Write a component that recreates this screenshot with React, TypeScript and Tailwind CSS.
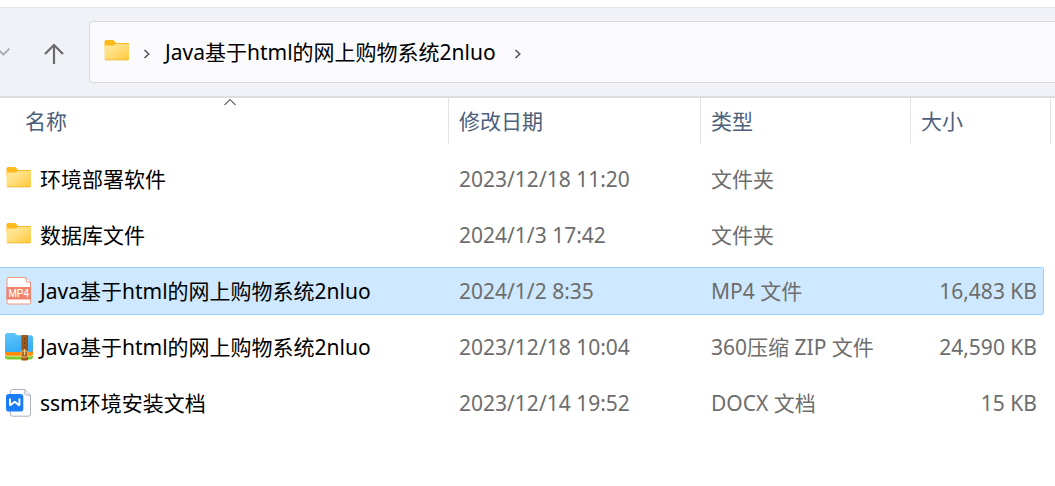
import React, { useId, useState } from "react";

type Kind = "folder" | "mp4" | "zip" | "docx";

interface Entry {
  id: number;
  kind: Kind;
  name: string;
  modified: string;
  type: string;
  size: string;
}

const entries: Entry[] = [
  { id: 1, kind: "folder", name: "环境部署软件", modified: "2023/12/18 11:20", type: "文件夹", size: "" },
  { id: 2, kind: "folder", name: "数据库文件", modified: "2024/1/3 17:42", type: "文件夹", size: "" },
  { id: 3, kind: "mp4", name: "Java基于html的网上购物系统2nluo", modified: "2024/1/2 8:35", type: "MP4 文件", size: "16,483 KB" },
  { id: 4, kind: "zip", name: "Java基于html的网上购物系统2nluo", modified: "2023/12/18 10:04", type: "360压缩 ZIP 文件", size: "24,590 KB" },
  { id: 5, kind: "docx", name: "ssm环境安装文档", modified: "2023/12/14 19:52", type: "DOCX 文档", size: "15 KB" },
];

function FolderIcon() {
  const id = useId();
  return (
    <svg width="28" height="28" viewBox="0 0 28 28" aria-hidden="true" className="shrink-0">
      <defs>
        <linearGradient id={id} x1="0" y1="0" x2="1" y2="1">
          <stop offset="0" stopColor="#ffe9a2" />
          <stop offset="0.5" stopColor="#ffdc78" />
          <stop offset="1" stopColor="#ffc836" />
        </linearGradient>
      </defs>
      <path d="M1.500 3.500a1.500 1.500 0 0 1 1.500-1.500h6.500c.6 0 1 .2 1.400.6L13 5h12a1 1 0 0 1 1 1V11H1.500z" fill="#fbb91b" />
      <path d="M1.500 8.700c0-.8.500-1.200 1.300-1.200h6.800c.7 0 1.100-.2 1.600-.6l.7-.5c.4-.3.800-.4 1.300-.4H25c.6 0 1 .4 1 1V20.700a1.300 1.300 0 0 1-1.300 1.300H2.800a1.300 1.300 0 0 1-1.300-1.300z" fill={`url(#${id})`} />
      <path d="M2 21.500c.2.300.5.400.8.400h21.900c.4 0 .7-.1.900-.4" fill="none" stroke="#eeb52e" strokeWidth="0.800" />
    </svg>
  );
}

function Mp4Icon() {
  return (
    <svg width="28" height="28" viewBox="0 0 28 28" aria-hidden="true" className="shrink-0">
      <path d="M3 .5h17.500L25.500 5V26a1 1 0 0 1-1 1H3a1 1 0 0 1-1-1V1.500a1 1 0 0 1 1-1z" fill="#fff" stroke="#f2957f" strokeWidth="1" />
      <path d="M21 .8V3.800a1.200 1.200 0 0 0 1.200 1.200h3.100" fill="#fff" stroke="#f2866d" strokeWidth="1" />
      <rect x="1.500" y="10" width="24.500" height="12.500" fill="#f2826a" />
      <text x="13.700" y="19.700" textAnchor="middle" fontFamily="Liberation Sans, sans-serif" fontSize="10" fill="#fff" stroke="#fff" strokeWidth="0.200">MP4</text>
    </svg>
  );
}

function ZipIcon() {
  const id = useId();
  return (
    <svg width="28" height="28" viewBox="0 0 28 28" aria-hidden="true" className="shrink-0">
      <defs>
        <linearGradient id={id} x1="0" y1="0" x2="0.300" y2="1">
          <stop offset="0" stopColor="#62c5fb" />
          <stop offset="1" stopColor="#36aef5" />
        </linearGradient>
      </defs>
      <path d="M0 17h28v6.500a3 3 0 0 1-3 3H3a3 3 0 0 1-3-3z" fill="#7dcb2c" />
      <path d="M0 15h28v6a2.500 2.500 0 0 1-2.500 2.500h-23A2.500 2.500 0 0 1 0 21z" fill="#fff3b8" />
      <path d="M0 15h28v5.200a2.500 2.500 0 0 1-2.500 2.500h-23A2.500 2.500 0 0 1 0 20.200z" fill="#ff8b0f" />
      <path d="M0 2.500a2.500 2.500 0 0 1 2.500-2.500H9c.9 0 1.500.3 2 .9l1.200 1.300h13.300A2.500 2.500 0 0 1 28 4.700V17a2 2 0 0 1-2 2H2a2 2 0 0 1-2-2z" fill={`url(#${id})`} />
      <rect x="16.300" y="2" width="6.400" height="25.500" rx="0.800" fill="#a0581d" />
      <path d="M19.500 5.500v12" stroke="#5f300b" strokeWidth="1.200" strokeDasharray="1.300 2.700" />
      <path d="M22.300 2.500v24.500" stroke="#7d4412" strokeWidth="0.800" />
      <rect x="16.200" y="18" width="6.600" height="6" rx="0.500" fill="#a5642a" stroke="#edc16b" strokeWidth="1" />
      <path d="M19.500 16v6" stroke="#f3cf82" strokeWidth="1.200" />
    </svg>
  );
}

function DocxIcon() {
  return (
    <svg width="28" height="28" viewBox="0 0 28 28" aria-hidden="true" className="shrink-0">
      <path d="M7.500.5h12.300L25.500 6v19a2.200 2.200 0 0 1-2.200 2.200H7.500A2.200 2.200 0 0 1 5.300 25V2.700A2.200 2.200 0 0 1 7.500.5z" fill="#fdfdff" stroke="#a9b0c0" strokeWidth="1" />
      <path d="M19.800.7v3.600A1.700 1.700 0 0 0 21.500 6h3.800" fill="#eef0f5" stroke="#a9b0c0" strokeWidth="1" />
      <rect x="1" y="5" width="17.300" height="17.500" rx="2.800" fill="#1a7cf7" />
      <path d="M5 9.500v7l4.700-3.800 4.700 3.800v-7" fill="none" stroke="#fff" strokeWidth="1.900" strokeLinejoin="bevel" />
    </svg>
  );
}

function EntryIcon({ kind }: { kind: Kind }) {
  if (kind === "folder") return <FolderIcon />;
  if (kind === "mp4") return <Mp4Icon />;
  if (kind === "zip") return <ZipIcon />;
  return <DocxIcon />;
}

function CrumbChevron() {
  return (
    <svg width="8" height="12" viewBox="0 0 8 12" aria-hidden="true" className="shrink-0">
      <path d="M1.500 2 5.700 6 1.500 10" fill="none" stroke="#5c5c5c" strokeWidth="1.700" />
    </svg>
  );
}

function Toolbar() {
  return (
    <header className="flex h-[91px] items-center border-t border-b-2 border-t-[#e4e4e8] border-b-[#dddde1] bg-[#f1f2f8]">
      <button type="button" aria-label="最近浏览的位置" className="flex h-10 w-6 items-center">
        <svg width="12" height="10" viewBox="0 0 12 10" aria-hidden="true">
          <path d="M-3 1.500 3.500 7.500 9.500 1.500" fill="none" stroke="#a3a4a8" strokeWidth="1.700" />
        </svg>
      </button>
      <button type="button" aria-label="上移" className="ml-[18px] flex h-10 w-6 items-center justify-center pt-1">
        <svg width="22" height="22" viewBox="0 0 22 22" aria-hidden="true">
          <path d="M11 21V2M2 11l9-9 9 9" fill="none" stroke="#6b6b6d" strokeWidth="2.200" />
        </svg>
      </button>
      <nav aria-label="地址栏" className="ml-[23px] flex h-[62px] flex-1 items-center rounded-l border border-r-0 border-[#d8d9df] bg-[#fbfbfd] pl-[13px]">
        <FolderIcon />
        <span className="ml-3 flex pt-1">
          <CrumbChevron />
        </span>
        <a href="#folder" className="ml-[14px] whitespace-nowrap text-black">
          Java基于html的网上购物系统2nluo
        </a>
        <span className="ml-[18px] flex pt-1">
          <CrumbChevron />
        </span>
      </nav>
    </header>
  );
}

function HeaderCell({ label, sorted }: { label: string; sorted?: boolean }) {
  return (
    <th scope="col" aria-sort={sorted ? "ascending" : undefined} className="h-[53px] p-0 text-left align-top font-normal">
      <button
        type="button"
        className={`relative flex h-[46px] w-full items-center border-r border-[#e2e2e2] text-[#4c607a] ${sorted ? "pl-[25px]" : "pl-[10px]"}`}
      >
        {label}
        {sorted && (
          <svg width="12" height="8" viewBox="0 0 12 8" aria-hidden="true" className="absolute top-0 left-1/2">
            <path d="M.5 7 6 1.500l5.500 5.500" fill="none" stroke="#666" strokeWidth="1.100" />
          </svg>
        )}
      </button>
    </th>
  );
}

function Row({ entry, selected, onSelect }: { entry: Entry; selected: boolean; onSelect: () => void }) {
  const tone = selected ? "border-[#99d1ff] bg-[#cde8ff]" : "border-transparent";
  const cell = `flex h-12 items-center whitespace-nowrap border-y ${tone}`;
  return (
    <tr aria-selected={selected} onClick={onSelect} className="text-[#6d6d6d]">
      <td className="px-0 py-1">
        <div className={`${cell} gap-[7px] pl-[5px] text-black`}>
          <EntryIcon kind={entry.kind} />
          {entry.name}
        </div>
      </td>
      <td className="px-0 py-1">
        <div className={`${cell} pl-[10px]`}>{entry.modified}</div>
      </td>
      <td className="px-0 py-1">
        <div className={`${cell} pl-[10px]`}>{entry.type}</div>
      </td>
      <td className="px-0 py-1">
        <div className={`${cell} mr-[7px] justify-end rounded-r-xs border-r pr-[6px]`}>{entry.size}</div>
      </td>
    </tr>
  );
}

export default function App() {
  const [selectedId, setSelectedId] = useState(3);
  return (
    <div className="min-h-screen overflow-hidden bg-white pt-[7px] font-['Noto_Sans','Noto_Sans_CJK_SC',sans-serif] text-[21px] leading-7">
      <Toolbar />
      <main className="pr-1">
        <table className="w-full table-fixed border-collapse">
          <colgroup>
            <col />
            <col className="w-[252px]" />
            <col className="w-[210px]" />
            <col className="w-[140px]" />
          </colgroup>
          <thead>
            <tr>
              <HeaderCell label="名称" sorted />
              <HeaderCell label="修改日期" />
              <HeaderCell label="类型" />
              <HeaderCell label="大小" />
            </tr>
          </thead>
          <tbody>
            {entries.map((entry) => (
              <Row key={entry.id} entry={entry} selected={entry.id === selectedId} onSelect={() => setSelectedId(entry.id)} />
            ))}
          </tbody>
        </table>
      </main>
    </div>
  );
}
